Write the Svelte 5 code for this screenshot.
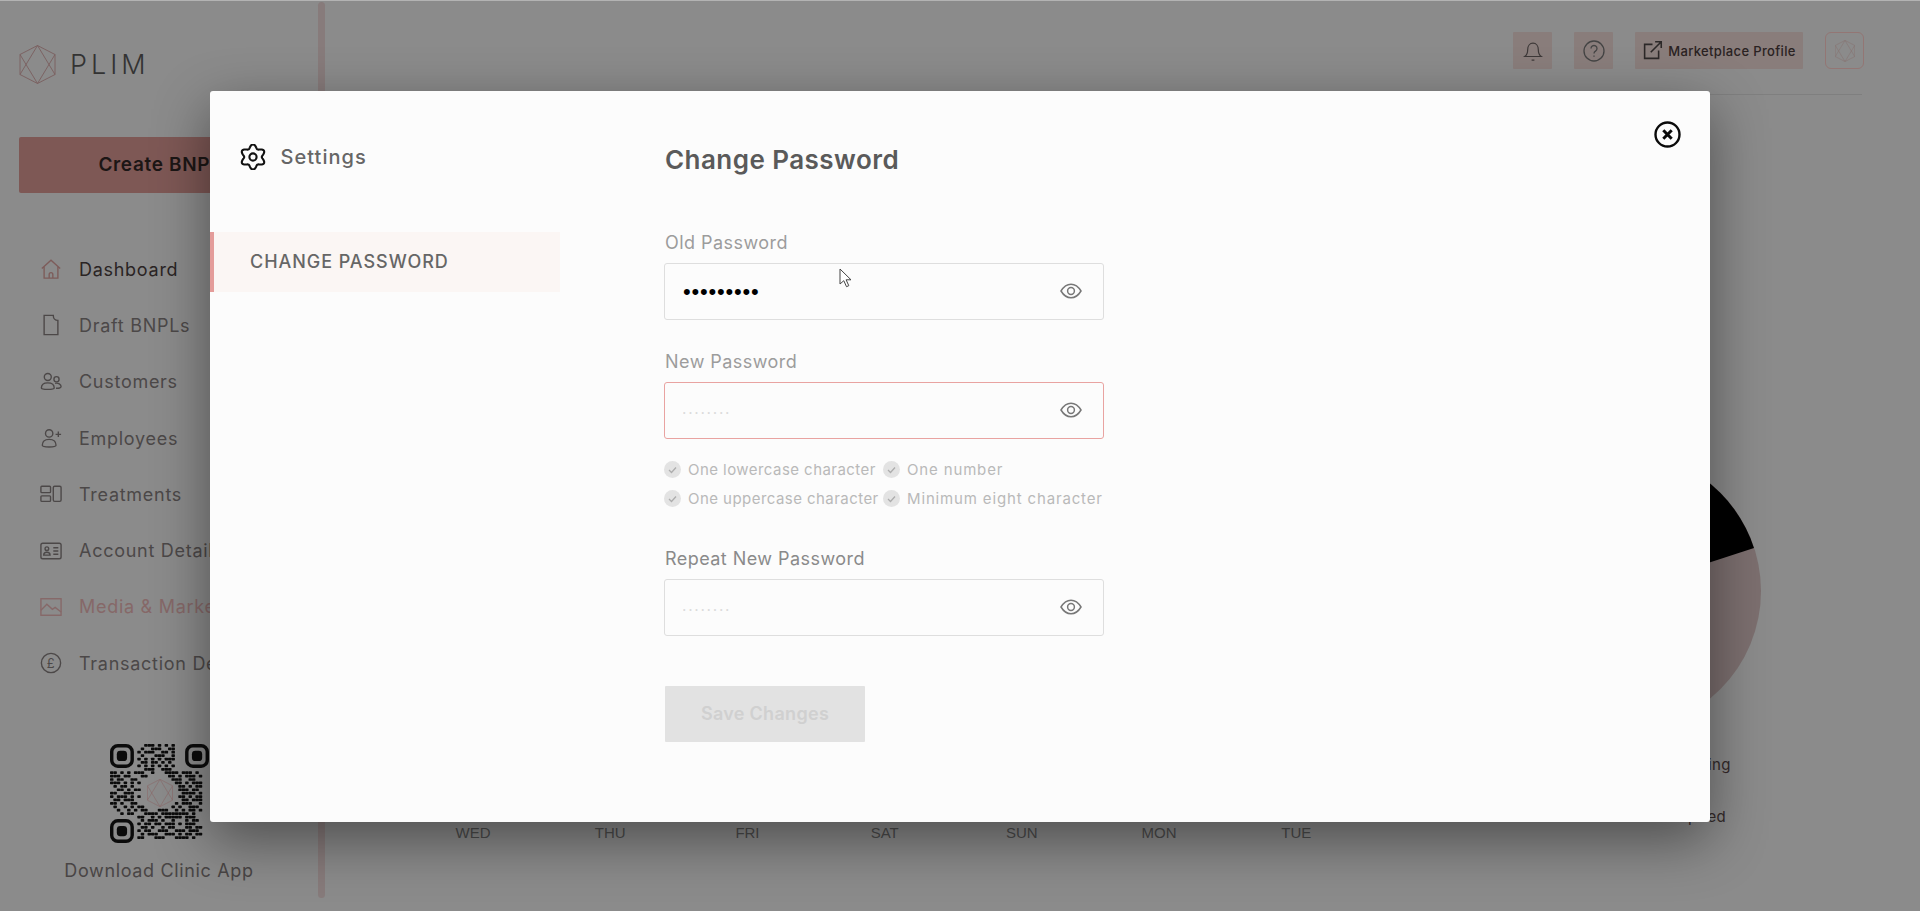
<script>
  const nav = [
    { label: 'Dashboard', icon: 'home', cls: 'active' },
    { label: 'Draft BNPLs', icon: 'doc', cls: '' },
    { label: 'Customers', icon: 'people', cls: '' },
    { label: 'Employees', icon: 'add', cls: '' },
    { label: 'Treatments', icon: 'tiles', cls: '' },
    { label: 'Account Details', icon: 'card', cls: '' },
    { label: 'Media & Marketing', icon: 'media', cls: 'pink' },
    { label: 'Transaction Details', icon: 'pound', cls: '' }
  ];
  const days = ['WED', 'THU', 'FRI', 'SAT', 'SUN', 'MON', 'TUE'];
  const rules = [
    'One lowercase character',
    'One number',
    'One uppercase character',
    'Minimum eight character'
  ];
  const qrRows = [
    '000000000011101010100000000',
    '000000000100111001100000000',
    '000000001011100110100000000',
    '000000000100011100100000000',
    '000000001010101011100000000',
    '000000000110110101000000000',
    '000000001010101010100000000',
    '000000000011100111000000000',
    '110101011100100011110111010',
    '111011000110000001101011101',
    '101100110000000000111001100',
    '111010101000000000011010111',
    '010110100000000000001101011',
    '001101011000000000001110110',
    '110011100000000000000111101',
    '101110101000000000001101011',
    '011011100000000000000110111',
    '110100110000000000010111001',
    '010010101100000000101001110',
    '001001010110001110010101101',
    '000101100011110111111110100',
    '000000001100101011111011100',
    '000000000101110100100010110',
    '000000001011011011101011100',
    '000000000110100101100011011',
    '000000001011001110011101110',
    '000000000101110011101011011',
    '000000001100011100011110100'
  ];
  const qrCells = qrRows.flatMap((row, y) =>
    [...row].flatMap((c, x) => (c === '1' ? [{ x, y }] : []))
  );
  let gearPts = [];
  for (let i = 0; i < 144; i++) {
    const t = (i / 144) * Math.PI * 2;
    const r = 10.7 + 1.9 * Math.cos(6 * t);
    gearPts.push(`${(13 + r * Math.sin(t)).toFixed(2)} ${(13 - r * Math.cos(t)).toFixed(2)}`);
  }
  const gear = 'M' + gearPts.join('L') + 'Z';
</script>

{#snippet mark(color)}
  <svg class="mark" viewBox="0 0 36 39" fill="none" stroke={color} stroke-width="0.9">
    <path d="M18 .5 35.500 9.500v20L18 38.500.5 29.500v-20z" />
    <path d="M18 .5.5 29.500M18 .5l17.500 29M18 38.500.5 9.500M18 38.500l17.500-29" />
  </svg>
{/snippet}

{#snippet eye()}
  <svg class="eye" viewBox="0 0 22 16" fill="none" stroke="#777" stroke-width="1.5">
    <path d="M1 8C4 3 7.500 1.200 11 1.200S18 3 21 8c-3 5-6.500 6.800-10 6.800S4 13 1 8z" />
    <circle cx="11" cy="8" r="3.400" />
  </svg>
{/snippet}

<div class="screen">
  <aside class="sidebar">
    <div class="brand">
      {@render mark('#7b5f5f')}
      <span class="brand-name">PLIM</span>
    </div>
    <div class="create">Create BNPL</div>
    <nav class="nav">
      {#each nav as item}
        <div class="nav-item {item.cls}">
          <svg class="nav-icon" viewBox="0 0 24 24" fill="none" stroke="currentColor" stroke-width="1.5">
            {#if item.icon === 'home'}
              <path stroke="#7d5c5a" d="M2 11.500 12 2.500l10 9M4.500 9.500V22h15V9.500M10 22v-4a2 2 0 0 1 4 0v4" />
            {:else if item.icon === 'doc'}
              <path d="M4.500 1.500h10c0 3 2 5.500 5 5.500v15.500h-15z" />
            {:else if item.icon === 'people'}
              <circle cx="8.500" cy="6.500" r="3.800" />
              <circle cx="18" cy="9" r="2.800" />
              <path d="M1.500 18.500c0-3.500 3-5.500 7-5.500s7 2 7 5.500c0 2-14 2-14 0z" />
              <path d="M16.500 13.500c3.500-.8 6.500 1 6.500 3.500 0 1.500-2.500 2-5.500 1.800" />
            {:else if item.icon === 'add'}
              <circle cx="10" cy="7" r="4" />
              <path d="M2.500 20c0-4 3-6.500 7.500-6.500s7.500 2.500 7.500 6.500c0 2.500-15 2.500-15 0zM20 5v6M17 8h6" />
            {:else if item.icon === 'tiles'}
              <rect x="1" y="3.500" width="10.500" height="7" rx="1" />
              <rect x="1" y="14" width="10.500" height="6" rx="1" />
              <rect x="14.500" y="3.500" width="8.500" height="16.500" rx="1.500" />
            {:else if item.icon === 'card'}
              <rect x="1" y="3.500" width="22" height="17" rx="2" />
              <circle cx="7.500" cy="9.500" r="2" />
              <path d="M4 16.500c0-2 1.500-3.200 3.500-3.200s3.500 1.200 3.500 3.200zM14.500 8.500H20M14.500 12H20M14.500 15.500H20" />
            {:else if item.icon === 'media'}
              <rect x="1" y="3" width="22" height="18" />
              <path d="M1 15.500 7.500 9l6 5.500 3-2 6.500 5" />
            {:else}
              <circle cx="12" cy="12" r="10.500" />
              <text x="12" y="17" text-anchor="middle" class="pound">£</text>
            {/if}
          </svg>
          <span class="nav-label">{item.label}</span>
        </div>
      {/each}
    </nav>
    <div class="qr">
      <svg viewBox="0 0 29 29" fill="#0b0b0b">
        {#each qrCells as c}
          <rect x={c.x} y={c.y} width="1.02" height="0.8" rx="0.2" />
        {/each}
        {#each [[0, 0], [22, 0], [0, 22]] as [fx, fy]}
          <rect x={fx + 0.5} y={fy + 0.5} width="6" height="6" rx="1.800" fill="none" stroke="#0b0b0b" />
          <rect x={fx + 2} y={fy + 2} width="3" height="3" rx="1" />
        {/each}
      </svg>
      <div class="qr-mark">{@render mark('#8a6b6b')}</div>
    </div>
    <div class="download">Download Clinic App</div>
  </aside>

  <div class="rail"></div>

  <main class="main">
    <header class="topbar">
      <div class="tool">
        <svg viewBox="0 0 24 24" fill="none" stroke="#3d3838" stroke-width="1.300">
          <path d="M3 18c2-1.500 3.200-3.500 3.200-7.500 0-4 2.300-7 5.800-7s5.800 3 5.800 7c0 4 1.200 6 3.200 7.500zM10.500 22h3" />
        </svg>
      </div>
      <div class="tool">
        <svg class="large" viewBox="0 0 24 24" fill="none" stroke="#444" stroke-width="1.300">
          <circle cx="12" cy="12" r="10" />
          <path d="M9 9.500a3 3 0 1 1 4.500 2.600c-1 .6-1.500 1.200-1.500 2.400M12 16.500v1.300" />
        </svg>
      </div>
      <div class="market">
        <svg viewBox="0 0 24 24" fill="none" stroke="#2c2828" stroke-width="1.800">
          <path d="M12 5H3v16h16v-9M10 14 22 2M15 2h7v7" />
        </svg>
        <span>Marketplace Profile</span>
      </div>
      <div class="avatar">{@render mark('#86706f')}</div>
    </header>
    <div class="divider"></div>
    <div class="content">
      <div class="chart">
        <div class="days">
          {#each days as d}<span>{d}</span>{/each}
        </div>
      </div>
      <div class="summary">
        <svg class="pie" viewBox="0 0 278 278">
          <circle cx="139" cy="139" r="139" fill="#7c6f6f" />
          <path d="M139 139 271 96A139 139 0 0 0 139 0z" fill="#000" />
        </svg>
        <div class="legend">
          <div class="legend-item"><i></i><span>Pending</span></div>
          <div class="legend-item"><i></i><span>Expired</span></div>
        </div>
      </div>
    </div>
  </main>

  <section class="modal">
    <aside class="modal-side">
      <div class="modal-title">
        <svg class="gear" viewBox="0 0 26 26" fill="none" stroke="#111" stroke-width="2.100">
          <path d={gear} stroke-linejoin="round" />
          <circle cx="13" cy="13" r="3.600" />
        </svg>
        <span>Settings</span>
      </div>
      <div class="tab">CHANGE PASSWORD</div>
    </aside>

    <form class="form">
      <h1>Change Password</h1>

      <label class="label first" for="old">Old Password</label>
      <div class="field">
        <input id="old" class="filled" type="password" value="123456789" />
        {@render eye()}
        <svg class="cursor" viewBox="0 0 14 20">
          <path d="M1 1v15l3.800-3.300 2.700 6 2.300-1-2.700-5.900H12z" fill="#fff" stroke="#444" stroke-width="1" stroke-linejoin="round" />
        </svg>
      </div>

      <label class="label" for="new">New Password</label>
      <div class="field">
        <input id="new" class="error" type="password" placeholder="••••••••" />
        {@render eye()}
      </div>

      <ul class="rules">
        {#each rules as rule}
          <li>
            <svg viewBox="0 0 17 17">
              <circle cx="8.500" cy="8.500" r="8.500" fill="#e3e3e3" />
              <path d="M5 9l2.500 2.500L12 6.500" fill="none" stroke="#adadad" stroke-width="1.300" />
            </svg>
            <span>{rule}</span>
          </li>
        {/each}
      </ul>

      <label class="label repeat" for="rep">Repeat New Password</label>
      <div class="field">
        <input id="rep" type="password" placeholder="••••••••" />
        {@render eye()}
      </div>

      <button class="save" type="button">Save Changes</button>
    </form>

    <div class="close">
      <svg viewBox="0 0 27 27" fill="none" stroke="#0a0a0a">
        <circle cx="13.500" cy="13.500" r="12" stroke-width="2.400" />
        <path d="M9.300 9.300l8.400 8.400M17.700 9.300l-8.400 8.400" stroke-width="3" />
      </svg>
    </div>
  </section>
</div>

<style>
  :global(body) {
    margin: 0;
    background: #8b8b8b;
  }
  .screen {
    position: relative;
    display: flex;
    width: 1920px;
    height: 911px;
    overflow: hidden;
    background: #8b8b8b;
    box-shadow: inset 0 1px #b3b3b3;
    font-family: Inter, "Noto Sans", sans-serif;
    color: #3f3b3b;
  }

  .sidebar {
    width: 318px;
    flex: none;
    box-sizing: border-box;
    padding: 45px 19px 0 19px;
  }
  .brand {
    display: flex;
    align-items: center;
    gap: 14px;
    height: 39px;
  }
  .brand .mark {
    width: 37px;
    height: 39px;
  }
  .brand-name {
    font-size: 27px;
    font-weight: 300;
    letter-spacing: 4px;
    color: #333;
  }
  .create {
    margin-top: 53px;
    width: 282px;
    height: 56px;
    line-height: 56px;
    text-align: center;
    background: #7e5855;
    border-radius: 2px;
    font-size: 19px;
    font-weight: 600;
    letter-spacing: 0.65px;
    color: #1c1615;
    white-space: nowrap;
  }
  .nav {
    margin-top: 48px;
  }
  .nav-item {
    display: flex;
    align-items: center;
    gap: 17px;
    height: 56.3px;
    padding-left: 21px;
    color: #4c4848;
    font-size: 18px;
    letter-spacing: 0.72px;
    white-space: nowrap;
  }
  .nav-item.active {
    color: #2a2424;
  }
  .nav-item.pink {
    color: #866868;
  }
  .nav-icon {
    width: 22px;
    height: 24px;
    flex: none;
  }
  .pound {
    font-size: 14px;
    stroke: none;
    fill: currentColor;
  }
  .qr {
    position: relative;
    width: 99px;
    height: 99px;
    margin: 53px 0 0 91px;
  }
  .qr svg {
    display: block;
    width: 100%;
    height: 100%;
  }
  .qr-mark {
    position: absolute;
    left: 37px;
    top: 35px;
    width: 26px;
    height: 28px;
  }
  .download {
    margin-top: 17px;
    line-height: 22px;
    text-align: center;
    font-size: 18px;
    letter-spacing: 0.65px;
    color: #494545;
    white-space: nowrap;
  }

  .rail {
    flex: none;
    width: 7px;
    height: 896px;
    margin-top: 2px;
    border-radius: 4px;
    background: #877b7b;
  }

  .main {
    flex: 1;
    min-width: 0;
  }
  .topbar {
    display: flex;
    justify-content: flex-end;
    gap: 22px;
    height: 37px;
    margin: 32px 56px 0 0;
  }
  .tool,
  .market {
    display: flex;
    align-items: center;
    justify-content: center;
    background: #897d7b;
    border-radius: 1px;
  }
  .tool {
    width: 39px;
  }
  .tool svg {
    width: 22px;
    height: 22px;
  }
  .tool svg.large {
    width: 24px;
    height: 24px;
  }
  .market {
    width: 168px;
    gap: 5px;
    font-size: 13px;
    font-weight: 500;
    letter-spacing: 0.35px;
    color: #2a2222;
    white-space: nowrap;
  }
  .market svg {
    width: 21px;
    height: 21px;
  }
  .avatar {
    display: flex;
    align-items: center;
    justify-content: center;
    width: 39px;
    box-sizing: border-box;
    border: 1px solid #937674;
    border-radius: 6px;
  }
  .avatar .mark {
    width: 20px;
    height: 22px;
  }
  .divider {
    height: 1px;
    margin: 25px 58px 0 0;
    background: #7f7f7f;
  }
  .content {
    display: flex;
    justify-content: space-between;
    padding-right: 159px;
  }
  .chart {
    padding-left: 79.5px;
  }
  .days {
    display: flex;
    margin-top: 729px;
  }
  .days span {
    width: 137.2px;
    text-align: center;
    font: 15px/18px "Liberation Sans", Arial, sans-serif;
    color: #4c4c4c;
  }
  .summary {
    width: 278px;
  }
  .pie {
    display: block;
    width: 278px;
    height: 278px;
    margin-top: 357px;
  }
  .legend {
    display: flex;
    flex-direction: column;
    gap: 32px;
    margin: 24px 0 0 162px;
  }
  .legend-item {
    display: flex;
    align-items: center;
    gap: 15px;
    height: 20px;
    font-size: 15px;
    letter-spacing: 0.4px;
    color: #342a2a;
  }
  .legend-item i {
    width: 10px;
    height: 10px;
    border-radius: 50%;
    background: #444;
  }

  .modal {
    position: absolute;
    left: 210px;
    top: 91px;
    width: 1500px;
    height: 731px;
    display: flex;
    background: #fcfcfc;
    border-radius: 3px;
    box-shadow: 0 18px 56px rgba(0, 0, 0, 0.44);
  }
  .modal-side {
    width: 350px;
    flex: none;
  }
  .modal-title {
    display: flex;
    align-items: center;
    gap: 15px;
    height: 26px;
    margin: 53px 0 62px 29.5px;
    font-size: 20px;
    font-weight: 500;
    letter-spacing: 1.05px;
    color: #666;
  }
  .gear {
    width: 26px;
    height: 26px;
  }
  .tab {
    box-sizing: border-box;
    height: 60px;
    line-height: 59px;
    padding-left: 36px;
    border-left: 4px solid #e49c9a;
    background: #fbf6f4;
    font-size: 18px;
    font-weight: 500;
    letter-spacing: 0.95px;
    color: #666;
  }

  .form {
    width: 440px;
    margin-left: 104px;
    padding-top: 53px;
  }
  h1 {
    margin: 0 0 0 1px;
    font-size: 26px;
    line-height: 32px;
    font-weight: 600;
    letter-spacing: 0.45px;
    color: #5a5a5a;
  }
  .label {
    display: block;
    margin: 31px 0 9px 1px;
    font-size: 18px;
    line-height: 22px;
    letter-spacing: 0.45px;
    color: #9c9c9c;
  }
  .label.first {
    margin: 56px 0 9px 1px;
  }
  .label.repeat {
    margin-top: 40px;
    color: #8a8a8a;
  }
  .field {
    position: relative;
    height: 57px;
  }
  input {
    display: block;
    width: 100%;
    height: 100%;
    box-sizing: border-box;
    padding: 3px 0 0 18px;
    border: 1.5px solid #dedede;
    border-radius: 3px;
    background: transparent;
    outline: none;
    font-family: "Liberation Sans", sans-serif;
    font-size: 7px;
    letter-spacing: 3.7px;
    color: #ddd;
  }
  input::placeholder {
    color: #dadada;
    opacity: 1;
  }
  input.filled {
    font-size: 22px;
    letter-spacing: 0.8px;
    padding-top: 0;
    color: #000;
  }
  input.error {
    border: 1px solid #e9a3a1;
  }
  .eye {
    position: absolute;
    right: 22px;
    top: 20px;
    width: 22px;
    height: 16px;
  }
  .cursor {
    position: absolute;
    left: 175px;
    top: 5px;
    width: 14px;
    height: 20px;
  }
  .rules {
    display: grid;
    grid-template-columns: 219px auto;
    row-gap: 9px;
    margin: 20px 0 0;
    padding: 0;
    list-style: none;
  }
  .rules li {
    display: flex;
    align-items: center;
    gap: 7px;
    height: 20px;
    font-size: 15px;
    letter-spacing: 0.45px;
    color: #b9b9b9;
    white-space: nowrap;
  }
  .rules li:nth-child(even) {
    letter-spacing: 0.85px;
  }
  .rules svg {
    width: 17px;
    height: 17px;
    flex: none;
  }
  .save {
    display: block;
    width: 200px;
    height: 56px;
    margin: 50px 0 0 1px;
    padding: 0 0 2px;
    border: 0;
    border-radius: 1px;
    background: #e2e2e2;
    font-family: inherit;
    font-size: 18px;
    font-weight: 600;
    letter-spacing: 0.3px;
    color: #d0d0d0;
  }
  .close {
    position: absolute;
    right: 29px;
    top: 30px;
    width: 27px;
    height: 27px;
  }
</style>
